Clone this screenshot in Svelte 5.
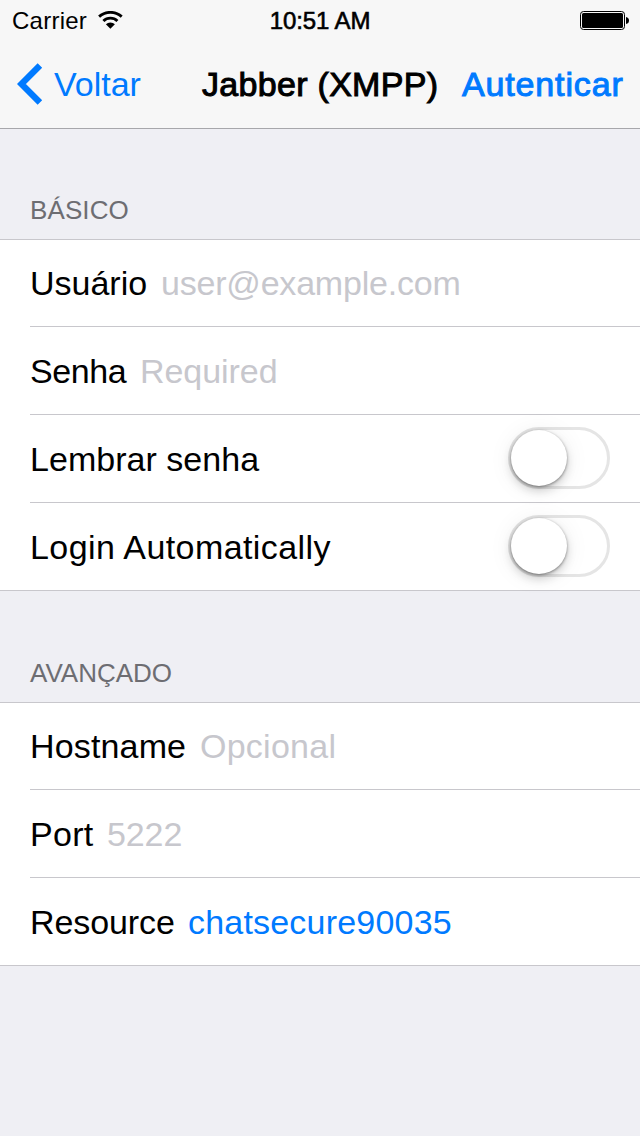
<script>
  const sections = [
    {
      title: 'BÁSICO',
      tracking: 0.1,
      rows: [
        { label: 'Usuário', width: 117, tracking: 0, value: 'user@example.com', valueTracking: -0.2 },
        { label: 'Senha', width: 96, tracking: -0.4, value: 'Required', valueTracking: -0.05 },
        { label: 'Lembrar senha', tracking: 0.03, toggle: true },
        { label: 'Login Automatically', tracking: 0.42, toggle: true }
      ]
    },
    {
      title: 'AVANÇADO',
      tracking: 0,
      rows: [
        { label: 'Hostname', width: 156, tracking: 0.15, value: 'Opcional', valueTracking: 0.25 },
        { label: 'Port', width: 63, tracking: 0.3, value: '5222', valueTracking: -0.1 },
        { label: 'Resource', width: 144, tracking: -0.1, value: 'chatsecure90035', valueTracking: 0.2, filled: true }
      ]
    }
  ];
</script>

<div class="screen">
  <header>
    <div class="status">
      <div class="carrier">
        <span>Carrier</span>
        <svg width="26" height="19" viewBox="0 0 26 19">
          <g fill="none" stroke="#000" stroke-width="2.9">
            <path d="M2.1 5.6a17.2 17.2 0 0 1 22.6 0" />
            <path d="M6.4 10a10 10 0 0 1 14 0" />
          </g>
          <path d="M8.9 13.3a6.3 6.3 0 0 1 9 0L13.4 17.7z" />
        </svg>
      </div>
      <span class="time">10:51 AM</span>
      <svg class="battery" width="49" height="19" viewBox="0 0 49 19">
        <rect x=".5" y=".5" width="44" height="18" rx="3" fill="none" stroke="#000" />
        <rect x="2" y="2" width="41" height="15" rx="1.5" />
        <path d="M46 6q3 .5 3 3.5t-3 3.5z" />
      </svg>
    </div>
    <nav>
      <a class="back" href="#back">
        <svg width="26" height="42" viewBox="0 0 26 42">
          <path d="M22.9 2.4 4.4 21l18.5 18.6" fill="none" stroke="#007aff" stroke-width="6.4" />
        </svg>
        <span>Voltar</span>
      </a>
      <h1>Jabber (XMPP)</h1>
      <a class="action" href="#login">Autenticar</a>
    </nav>
  </header>

  {#each sections as section}
    <section>
      <h2 style="letter-spacing: {section.tracking}px">{section.title}</h2>
      <div class="group">
        {#each section.rows as row}
          <div class="row">
            <span class="label" style="letter-spacing: {row.tracking}px; width: {row.width ? row.width + 'px' : 'auto'}">{row.label}</span>
            {#if row.toggle}
              <span class="switch"><span class="knob"></span></span>
            {:else}
              <span class="value" class:filled={row.filled} style="letter-spacing: {row.valueTracking}px">{row.value}</span>
            {/if}
          </div>
        {/each}
      </div>
    </section>
  {/each}
</div>

<style>
  :global(body) {
    margin: 0;
    background: #efeff4;
  }
  .screen {
    width: 640px;
    height: 1136px;
    overflow: hidden;
    background: #efeff4;
    color: #000;
    font-family: "Liberation Sans", Arial, sans-serif;
    font-size: 34px;
    white-space: nowrap;
  }
  header {
    box-sizing: border-box;
    height: 129px;
    background: #f7f7f7;
    border-bottom: 1px solid #a7a7ab;
  }
  svg {
    display: block;
    flex: none;
  }
  .status {
    display: grid;
    grid-template-columns: 1fr auto 1fr;
    align-items: center;
    height: 40px;
    padding: 1px 11px 0 12px;
    box-sizing: border-box;
    font-size: 24px;
  }
  .carrier {
    display: flex;
    align-items: center;
    gap: 10px;
    letter-spacing: 0.25px;
  }
  .time {
    margin-right: 1px;
    letter-spacing: -0.1px;
    -webkit-text-stroke: 0.6px #000;
  }
  .battery {
    justify-self: end;
  }
  nav {
    display: flex;
    align-items: center;
    height: 88px;
    padding: 0 16px 0 17px;
  }
  a {
    color: #007aff;
    text-decoration: none;
  }
  .back {
    display: flex;
    align-items: center;
    gap: 11px;
    width: 185px;
  }
  h1 {
    margin: 0;
    width: 260px;
    font-size: 34px;
    font-weight: 400;
    letter-spacing: 0.3px;
    -webkit-text-stroke: 1px #000;
  }
  .action {
    letter-spacing: 0.85px;
    -webkit-text-stroke: 1px #007aff;
  }
  section {
    display: flex;
    flex-direction: column;
  }
  h2 {
    box-sizing: border-box;
    height: 110px;
    margin: 0;
    padding: 66px 30px 0;
    font-size: 26px;
    line-height: 30px;
    font-weight: 400;
    color: #6d6d72;
  }
  section + section h2 {
    height: 111px;
    padding-top: 67px;
  }
  .group {
    background: #fff;
    border-top: 1px solid #c8c7cc;
    border-bottom: 1px solid #c8c7cc;
  }
  .row {
    display: flex;
    align-items: center;
    box-sizing: border-box;
    height: 88px;
    margin-left: 30px;
    padding: 2px 30px 0 0;
    border-bottom: 1px solid #c8c7cc;
  }
  .row:first-child {
    height: 87px;
    padding-top: 0;
  }
  .row:last-child {
    height: 87px;
    border-bottom: 0;
  }
  .label {
    flex: none;
    margin-right: 14px;
  }
  .value {
    color: #c7c7cd;
  }
  .value.filled {
    color: #007aff;
  }
  .switch {
    box-sizing: border-box;
    width: 102px;
    height: 62px;
    margin: 0 0 3px auto;
    border: 3px solid #e5e5e5;
    border-radius: 31px;
  }
  .knob {
    display: block;
    width: 56px;
    height: 56px;
    border-radius: 50%;
    background: #fff;
    box-shadow: 0 1px 3px rgba(0, 0, 0, 0.42), 0 5px 10px rgba(0, 0, 0, 0.17), 0 2px 26px rgba(0, 0, 0, 0.07);
  }
</style>
